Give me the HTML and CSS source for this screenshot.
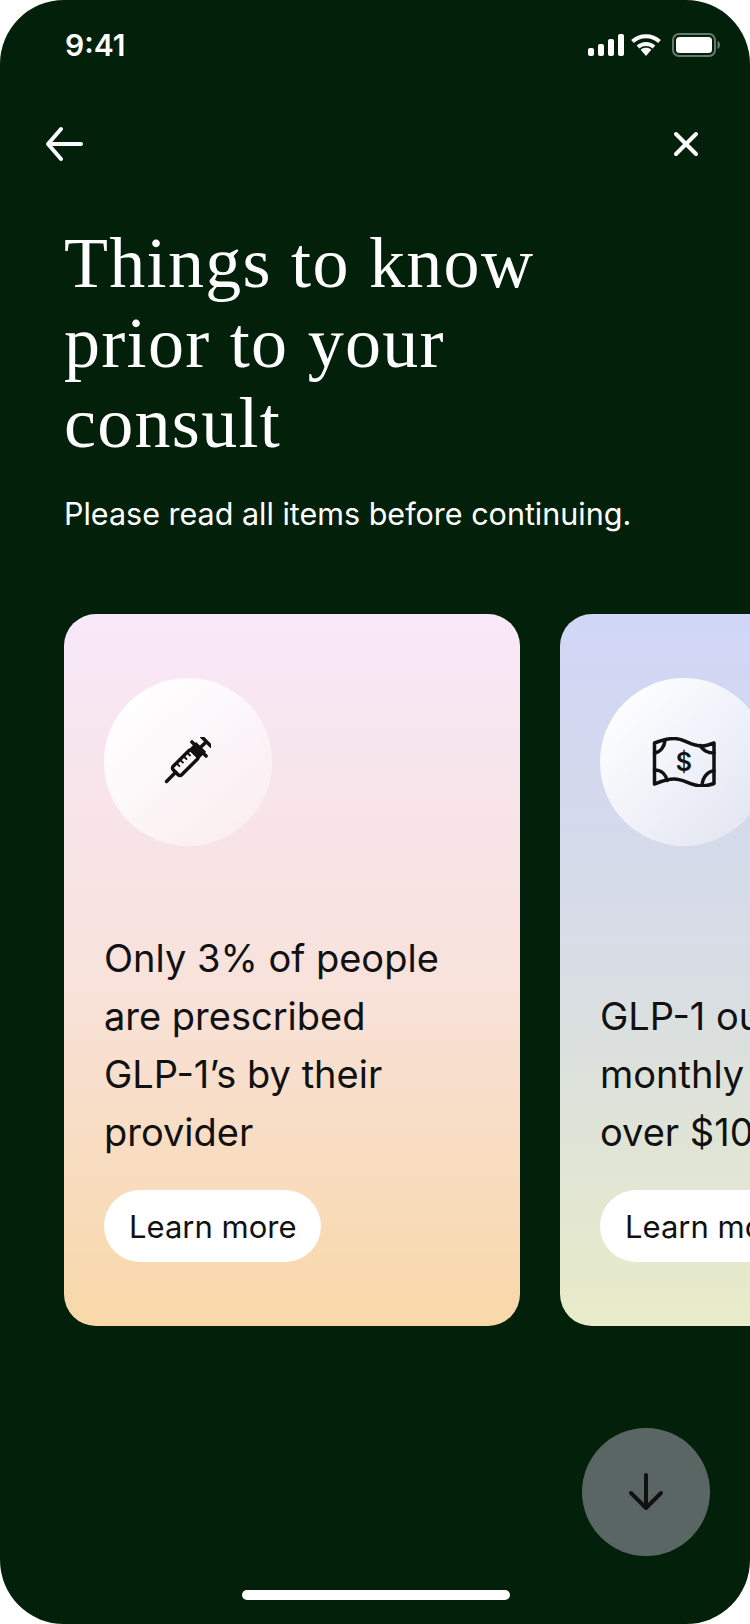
FILE: index.html
```html
<html>
  <head>
    <title>Things to know</title>
    <meta name="viewport" content="width=device-width, initial-scale=1.0" />
    <link rel="stylesheet" href="styles.css">
  </head>
  <body>
    <div class="screen">
      <div class="status">
        <span class="time">9:41</span>
        <div class="status-icons">
          <svg width="36" height="22" viewBox="0 0 36 22">
            <rect x="0" y="14" width="6" height="8" rx="2" />
            <rect x="10" y="10" width="6" height="12" rx="2" />
            <rect x="20" y="5" width="6" height="17" rx="2" />
            <rect x="30" y="0" width="6" height="22" rx="2" />
          </svg>
          <svg class="wifi" width="32" height="24" viewBox="0 0 32 24">
            <path class="wifi-arc" d="M2.500 8.500C10 1.500 22 1.500 29.500 8.500" />
            <path class="wifi-arc" d="M8 14c4.500-4 11.500-4 16 0" />
            <path d="M10.700 16.800c3-2.600 7.600-2.600 10.600 0L16 23z" fill="#fff" />
          </svg>
          <svg width="48" height="24" viewBox="0 0 48 24">
            <rect class="batt-line" x="1" y="1" width="42" height="22" rx="6" />
            <rect x="4" y="4" width="36" height="16" rx="3.500" />
            <path class="batt-tip" d="M45.500 8c1.500.5 2.500 2 2.500 4s-1 3.500-2.500 4z" />
          </svg>
        </div>
      </div>

      <div class="nav">
        <svg width="40" height="36" viewBox="0 0 40 36">
          <path class="line" d="M37 18H4M17 3L4 18l13 15" />
        </svg>
        <svg width="28" height="26" viewBox="0 0 28 26">
          <path class="line" d="M4 3l20 20M24 3L4 23" />
        </svg>
      </div>

      <h1 class="title">Things to know<br>prior to your<br>consult</h1>
      <p class="subtitle">Please read all items before continuing.</p>

      <div class="cards">
        <div class="card card-pink">
          <div class="circle">
            <svg class="syringe" width="48" height="48" viewBox="0 0 48 48">
              <g transform="translate(24 24) rotate(-45)">
                <path class="ink" d="M-29 0H-16" />
                <rect class="ink" x="-16" y="-6" width="27" height="12" rx="2.500" />
                <path class="ink thin" d="M-9 -6V-1M-4 -6V-1M1 -6V-1M6 -6V-1" />
                <rect class="solid" x="9" y="-7" width="11" height="14" />
                <path class="ink" d="M17 -10V10M20 0H27M27.500 -6.500V6.500" />
              </g>
            </svg>
          </div>
          <p class="card-text">Only 3% of people<br>are prescribed<br>GLP-1’s by their<br>provider</p>
          <a class="more">Learn more</a>
        </div>
        <div class="card card-blue">
          <div class="circle">
            <svg width="64" height="50" viewBox="0 0 64 50">
              <path class="ink" d="M2.500 6C9 3.500 15 1.500 22 1.500C33 1.500 38 9 50 9C54 9 58 7.500 62 6V46.500C58 48 54 49 50 49C38 49 33 42 22 42C15 42 9 44.500 2.500 47Z" />
              <path class="ink" d="M2.500 16C8 15.500 12.500 10 13 3.500M2.500 33C10 33 14 38 15 43.500M62 16C56 16 50 13 48.500 8.500M62 34C56 34 50.500 40 50 48.500" />
              <text class="dollar" x="32" y="34" text-anchor="middle">$</text>
            </svg>
          </div>
          <p class="card-text">GLP-1 out of pocket<br>monthly costs are<br>over $1000</p>
          <a class="more">Learn more</a>
        </div>
      </div>

      <div class="fab">
        <svg width="36" height="40" viewBox="0 0 36 40">
          <path class="ink arrow" d="M18 3V36M3 21l15 15 15-15" />
        </svg>
      </div>
      <div class="home-bar"></div>
    </div>
  </body>
</html>
```

FILE: styles.css
```css
body {
  margin: 0;
  background: #fff;
  font-family: Inter, sans-serif;
}
.screen {
  position: relative;
  width: 750px;
  height: 1624px;
  background: #03200a;
  border-radius: 64px;
  overflow: hidden;
  color: #fff;
}
.status {
  display: flex;
  justify-content: space-between;
  align-items: center;
  padding: 28px 30px 0 65px;
  height: 34px;
}
.time {
  font-size: 30px;
  font-weight: 600;
}
.status-icons {
  display: flex;
  align-items: center;
  gap: 8px;
  fill: #fff;
}
.wifi {
  margin-left: -2px;
  margin-right: 2px;
}
.wifi-arc {
  fill: none;
  stroke: #fff;
  stroke-width: 4;
}
.batt-line {
  fill: none;
  stroke: #fff;
  stroke-width: 2;
  opacity: 0.4;
}
.batt-tip {
  opacity: 0.4;
}
.nav {
  display: flex;
  justify-content: space-between;
  align-items: center;
  padding: 64px 50px 0 44px;
}
.line {
  fill: none;
  stroke: #fff;
  stroke-width: 4;
  stroke-linecap: round;
  stroke-linejoin: round;
}
.title {
  margin: 61px 0 0 64px;
  font-family: "Liberation Serif", serif;
  font-size: 72px;
  font-weight: 400;
  line-height: 80px;
  letter-spacing: 1.300px;
}
.subtitle {
  margin: 31px 0 0 64px;
  font-size: 30.500px;
  line-height: 40px;
}
.cards {
  display: flex;
  gap: 40px;
  margin-top: 80px;
  padding-left: 64px;
}
.card {
  flex: none;
  display: flex;
  flex-direction: column;
  align-items: flex-start;
  box-sizing: border-box;
  width: 456px;
  height: 712px;
  padding: 64px 40px;
  border-radius: 32px;
  color: #111;
}
.card-pink {
  background: linear-gradient(180deg, #f8e8f9 0%, #f8e2dc 50%, #f8d8a8 100%);
}
.card-blue {
  background: linear-gradient(180deg, #d0d6f6 0%, #d8dde4 50%, #e8ecc8 100%);
}
.circle {
  display: flex;
  align-items: center;
  justify-content: center;
  flex: none;
  width: 168px;
  height: 168px;
  border-radius: 50%;
  background: linear-gradient(135deg, #fff 10%, rgba(255, 255, 255, 0.25) 100%);
}
.syringe {
  margin: 0 2px 2px 0;
}
.ink {
  fill: none;
  stroke: #111;
  stroke-width: 3.500;
  stroke-linecap: round;
  stroke-linejoin: round;
}
.thin {
  stroke-width: 2;
  stroke-linecap: butt;
}
.arrow {
  stroke-width: 4;
}
.solid {
  fill: #111;
}
.dollar {
  font-size: 25px;
  font-weight: 600;
  fill: #111;
}
.card-text {
  margin: auto 0 0;
  font-size: 38px;
  line-height: 58px;
  white-space: nowrap;
}
.more {
  margin-top: 29px;
  padding: 0 25px;
  height: 72px;
  line-height: 74px;
  border-radius: 36px;
  background: #fff;
  font-size: 31px;
  white-space: nowrap;
}
.fab {
  position: absolute;
  left: 582px;
  top: 1428px;
  display: flex;
  align-items: center;
  justify-content: center;
  width: 128px;
  height: 128px;
  border-radius: 50%;
  background: #5a6663;
}
.home-bar {
  position: absolute;
  left: 242px;
  top: 1590px;
  width: 268px;
  height: 10px;
  border-radius: 5px;
  background: #fff;
}
```
